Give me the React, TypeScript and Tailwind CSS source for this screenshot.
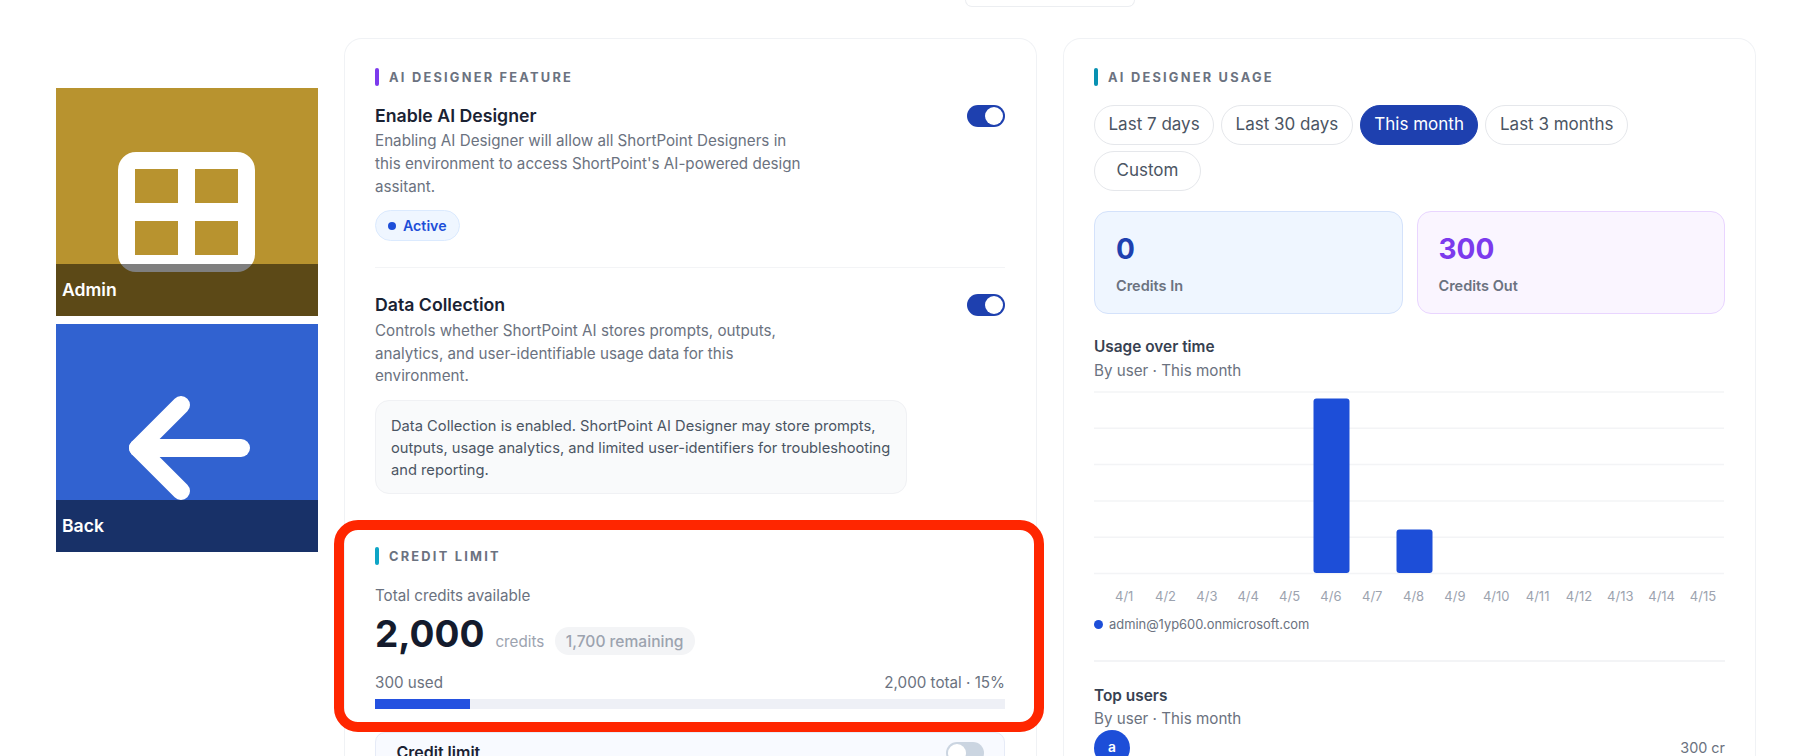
const dates = ["4/1", "4/2", "4/3", "4/4", "4/5", "4/6", "4/7", "4/8", "4/9", "4/10", "4/11", "4/12", "4/13", "4/14", "4/15"];
const gridLines = [1, 37.3, 73.6, 109.9, 146.2, 182.5];

function SectionLabel({ label, barClass }: { label: string; barClass: string }) {
  return (
    <div className="flex h-[18px] items-center gap-[10px]">
      <span className={`h-[18px] w-[4px] rounded-[2px] ${barClass}`}></span>
      <span className="pt-[1.5px] text-[12.8px] font-bold tracking-[0.175em] text-[#6b7280]">{label}</span>
    </div>
  );
}

function Toggle({ on }: { on: boolean }) {
  return (
    <div className={`flex h-[22px] w-[38px] shrink-0 items-center rounded-full px-[2px] ${on ? "justify-end bg-[#1e40af]" : "justify-start bg-[#cbd5e1]"}`}>
      <span className="h-[18px] w-[18px] rounded-full bg-white"></span>
    </div>
  );
}

function SettingRow({ title, lines }: { title: string; lines: string[] }) {
  return (
    <div className="flex items-start justify-between">
      <div>
        <div className="text-[17.7px] leading-[24px] font-semibold text-[#1a2233]">{title}</div>
        <div className="mt-[2.5px] text-[15.2px] leading-[22.8px] text-[#6b7280]">
          {lines.map((line) => (
            <div key={line}>{line}</div>
          ))}
        </div>
      </div>
      <div className="mt-[1px]">
        <Toggle on />
      </div>
    </div>
  );
}

function Tile({ label, bgClass, children }: { label: string; bgClass: string; children: React.ReactNode }) {
  return (
    <div className={`relative h-[228px] w-[262px] overflow-hidden ${bgClass}`}>
      {children}
      <div className="absolute right-0 bottom-0 left-0 flex h-[52px] items-center bg-black/50 pl-[6.5px] text-[17.6px] font-semibold text-white">
        {label}
      </div>
    </div>
  );
}

function RangeChip({ label, active, wide }: { label: string; active?: boolean; wide?: boolean }) {
  return (
    <div
      className={`flex h-[40px] items-center justify-center rounded-full border-[1.5px] pt-[0.5px] text-[17px] ${wide ? "w-[107px]" : "px-[13.5px]"} ${
        active ? "border-[#1e40af] bg-[#1e40af] text-white" : "border-[#e5e7eb] bg-white text-[#4b5563]"
      }`}
    >
      {label}
    </div>
  );
}

function StatCard({ value, label, boxClass, valueClass }: { value: string; label: string; boxClass: string; valueClass: string }) {
  return (
    <div className={`h-[103px] flex-1 rounded-[14px] border-[1.5px] px-[21px] pt-[18px] ${boxClass}`}>
      <div className={`text-[28px] leading-[38px] font-bold ${valueClass}`}>{value}</div>
      <div className="mt-[8px] text-[14.5px] leading-[20px] font-semibold text-[#6b7280]">{label}</div>
    </div>
  );
}

function FeatureCard() {
  return (
    <div className="h-[730px] w-[693px] shrink-0 rounded-t-[18px] border-[1.5px] border-b-0 border-[#f0f2f5] bg-white px-[30.5px] pt-[28.5px]">
      <SectionLabel label="AI DESIGNER FEATURE" barClass="bg-[#7c3aed]" />

      <div className="mt-[18px]">
        <SettingRow
          title="Enable AI Designer"
          lines={[
            "Enabling AI Designer will allow all ShortPoint Designers in",
            "this environment to access ShortPoint's AI-powered design",
            "assitant.",
          ]}
        />
      </div>
      <div className="mt-[12px] inline-flex h-[31px] items-center gap-[7px] rounded-full border-[1.5px] border-[#dbeafe] bg-[#eff6ff] pr-[12px] pl-[11.5px] text-[14.2px] font-semibold text-[#1d4ed8]">
        <span className="h-[8.5px] w-[8.5px] rounded-full bg-[#1d4ed8]"></span>
        Active
      </div>

      <div className="mt-[25.5px] h-[1.5px] bg-[#f3f4f6]"></div>

      <div className="mt-[25px]">
        <SettingRow
          title="Data Collection"
          lines={[
            "Controls whether ShortPoint AI stores prompts, outputs,",
            "analytics, and user-identifiable usage data for this",
            "environment.",
          ]}
        />
      </div>
      <div className="mt-[12px] h-[94px] w-[532px] rounded-[14px] border-[1.5px] border-[#f0f1f4] bg-[#f9fafb] px-[15px] pt-[13.5px] text-[14.7px] leading-[22px] text-[#4b5563]">
        Data Collection is enabled. ShortPoint AI Designer may store prompts, outputs, usage analytics, and limited user-identifiers for troubleshooting and reporting.
      </div>

      <div className="mt-[53px]">
        <SectionLabel label="CREDIT LIMIT" barClass="bg-[#0ea5c6]" />
      </div>
      <div className="mt-[21px] text-[15.2px] leading-[20px] text-[#6b7280]">Total credits available</div>
      <div className="mt-[6px] flex items-baseline">
        <span className="text-[37px] leading-[44px] font-bold text-[#141b2d]">2,000</span>
        <span className="ml-[11px] text-[15.2px] text-[#9ca3af]">credits</span>
        <span className="ml-[10.5px] inline-flex h-[28px] items-baseline rounded-full bg-[#f3f4f6] px-[11px] pt-[3.5px] text-[15.6px] font-medium text-[#9ca3af]">
          1,700 remaining
        </span>
      </div>
      <div className="mt-[16.5px] flex justify-between text-[15.2px] leading-[20px] text-[#6b7280]">
        <span>300 used</span>
        <span>2,000 total · 15%</span>
      </div>
      <div className="mt-[6.5px] h-[9.5px] bg-[#eef0f6]">
        <div className="h-full w-[15%] bg-[#2451e0]"></div>
      </div>

      <div className="mt-[23px] flex h-[60px] items-start justify-between rounded-t-[10px] border-[1.5px] border-[#e6ebf7] bg-[#f8faff] pt-[9.5px] pr-[20px] pl-[20.5px]">
        <span className="text-[16px] leading-[20px] font-semibold text-[#1a2233]">Credit limit</span>
        <Toggle on={false} />
      </div>
    </div>
  );
}

function UsageChart() {
  return (
    <svg width="630" height="184" viewBox="0 0 630 184" className="block">
      {gridLines.map((y) => (
        <line key={y} x1="0" x2="630" y1={y} y2={y} stroke="#f3f4f6" strokeWidth="1.5" />
      ))}
      <rect x="219.5" y="7.5" width="36" height="174.5" rx="3" fill="#1d4ed8" />
      <rect x="302.5" y="138.5" width="36" height="43.5" rx="3" fill="#1d4ed8" />
    </svg>
  );
}

function UsageCard() {
  return (
    <div className="h-[730px] w-[693px] shrink-0 rounded-t-[18px] border-[1.5px] border-b-0 border-[#f0f2f5] bg-white px-[30px] pt-[28.5px]">
      <SectionLabel label="AI DESIGNER USAGE" barClass="bg-[#0891b2]" />

      <div className="mt-[19px] flex w-[560px] flex-wrap gap-x-[7px] gap-y-[6px]">
        <RangeChip label="Last 7 days" />
        <RangeChip label="Last 30 days" />
        <RangeChip label="This month" active />
        <RangeChip label="Last 3 months" />
        <RangeChip label="Custom" wide />
      </div>

      <div className="mt-[20.5px] flex gap-[14px]">
        <StatCard value="0" label="Credits In" boxClass="border-[#d4e2fb] bg-[#eff6ff]" valueClass="text-[#1e40af]" />
        <StatCard value="300" label="Credits Out" boxClass="border-[#e9d5ff] bg-[#faf5ff]" valueClass="text-[#7c3aed]" />
      </div>

      <div className="mt-[22px] text-[15.4px] leading-[22px] font-semibold text-[#374151]">Usage over time</div>
      <div className="mt-[1.5px] text-[15.2px] leading-[22px] text-[#6b7280]">By user · This month</div>

      <div className="mt-[9px]">
        <UsageChart />
      </div>
      <div className="mt-[12px] grid grid-cols-[repeat(15,41.35px)] pl-[9.5px]">
        {dates.map((d) => (
          <span key={d} className="text-center text-[13px] leading-[18px] text-[#9ca3af]">
            {d}
          </span>
        ))}
      </div>
      <div className="mt-[10px] flex items-center gap-[6px]">
        <span className="h-[9px] w-[9px] rounded-full bg-[#1d4ed8]"></span>
        <span className="text-[12.9px] leading-[20px] text-[#6b7280]">admin@1yp600.onmicrosoft.com</span>
      </div>

      <div className="mt-[25.5px] h-[1.5px] bg-[#f3f4f6]"></div>

      <div className="mt-[23px] text-[15.4px] leading-[22px] font-semibold text-[#374151]">Top users</div>
      <div className="mt-[1px] text-[15.2px] leading-[22px] text-[#6b7280]">By user · This month</div>
      <div className="flex items-center justify-between">
        <div className="flex h-[36px] w-[36px] items-center justify-center rounded-full bg-[#1d4ed8] text-[13.8px] font-semibold text-white">a</div>
        <span className="text-[14.4px] text-[#6b7280]">300 cr</span>
      </div>
    </div>
  );
}

export default function App() {
  return (
    <div
      className="relative h-[756px] w-[1806px] overflow-hidden bg-white"
      style={{ fontFamily: 'Inter, "Noto Sans", sans-serif' }}
    >
      <div className="h-[38px]">
        <div className="ml-[965px] h-[6.5px] w-[170px] rounded-b-[14px] border-[1.5px] border-t-0 border-[#eceef1] bg-white"></div>
      </div>

      <div className="flex pl-[55.5px]">
        <div className="mt-[50px] flex w-[262px] shrink-0 flex-col gap-[8px]">
          <Tile label="Admin" bgClass="bg-[#b8932f]">
            <div className="flex justify-center pt-[64px]">
              <svg width="137" height="120" viewBox="0 0 137 120">
                <path
                  fillRule="evenodd"
                  fill="#fff"
                  d="M18 0h101a18 18 0 0 1 18 18v84a18 18 0 0 1-18 18H18a18 18 0 0 1-18-18V18A18 18 0 0 1 18 0ZM17 17v34h43V17ZM77 17v34h43V17ZM17 69v34h43V69ZM77 69v34h43V69Z"
                />
              </svg>
            </div>
          </Tile>
          <Tile label="Back" bgClass="bg-[#3162d0]">
            <div className="flex justify-center pt-[72px] pl-[6px]">
              <svg width="121" height="105" viewBox="0 0 121 105" fill="none" stroke="#fff" strokeWidth="18" strokeLinecap="round" strokeLinejoin="round">
                <path d="M52 9 9 52l43 43" />
                <path d="M9 52h103" />
              </svg>
            </div>
          </Tile>
        </div>
        <div className="ml-[26px]">
          <FeatureCard />
        </div>
        <div className="ml-[26.5px]">
          <UsageCard />
        </div>
      </div>

      {/* annotation around the credit block */}
      <div className="pointer-events-none absolute top-[520px] left-[334px] z-10 h-[212px] w-[710px] rounded-[24px] border-[10px] border-[#ff2600]"></div>
    </div>
  );
}
